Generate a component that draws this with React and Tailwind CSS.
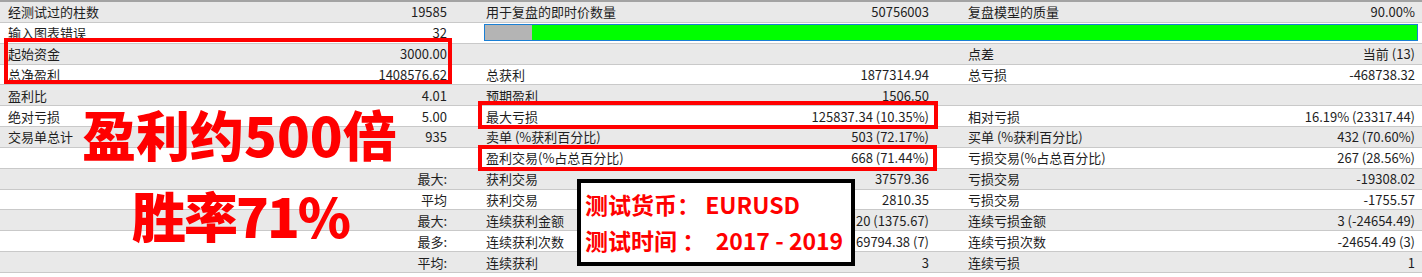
import React from 'react';

const rows = [
  ['经测试过的柱数', '19585', '用于复盘的即时价数量', '50756003', '复盘模型的质量', '90.00%'],
  ['输入图表错误', '32', null, null, null, null],
  ['起始资金', '3000.00', '', '', '点差', '当前 (13)'],
  ['总净盈利', '1408576.62', '总获利', '1877314.94', '总亏损', '-468738.32'],
  ['盈利比', '4.01', '预期盈利', '1506.50', '', ''],
  ['绝对亏损', '5.00', '最大亏损', '125837.34 (10.35%)', '相对亏损', '16.19% (23317.44)'],
  ['交易单总计', '935', '卖单 (%获利百分比)', '503 (72.17%)', '买单 (%获利百分比)', '432 (70.60%)'],
  ['', '', '盈利交易(%占总百分比)', '668 (71.44%)', '亏损交易(%占总百分比)', '267 (28.56%)'],
  ['', '最大:', '获利交易', '37579.36', '亏损交易', '-19308.02'],
  ['', '平均', '获利交易', '2810.35', '亏损交易', '-1755.57'],
  ['', '最大:', '连续获利金额', '20 (1375.67)', '连续亏损金额', '3 (-24654.49)'],
  ['', '最多:', '连续获利次数', '69794.38 (7)', '连续亏损次数', '-24654.49 (3)'],
  ['', '平均:', '连续获利', '3', '连续亏损', '1'],
];

function Row({ r, i }) {
  const bg = i % 2 === 0 ? 'bg-[#e9e9e9]' : 'bg-white';
  if (r[2] === null) {
    return (
      <div className={`grid grid-cols-[478px_462px_482px] h-[20.85px] border-b border-[#c9c9c9] ${bg}`}>
        <div className="flex items-center justify-between pl-2 pr-[31px]">
          <span>{r[0]}</span>
          <span>{r[1]}</span>
        </div>
        <div className="col-span-2 flex items-center pl-[6px] pr-[4px]">
          <div className="flex h-[17px] w-full border border-[#1a7fd4] bg-[#00ff00]">
            <div className="h-full w-[47px] bg-[#b4b4b4]" />
          </div>
        </div>
      </div>
    );
  }
  return (
    <div className={`grid grid-cols-[478px_462px_482px] h-[20.85px] border-b border-[#c9c9c9] ${bg}`}>
      <div className="flex items-center justify-between pl-2 pr-[31px]">
        <span>{r[0]}</span>
        <span>{r[1]}</span>
      </div>
      <div className="flex items-center justify-between pl-2 pr-[11px]">
        <span>{r[2]}</span>
        <span>{r[3]}</span>
      </div>
      <div className="flex items-center justify-between pl-[28px] pr-[7px]">
        <span>{r[4]}</span>
        <span>{r[5]}</span>
      </div>
    </div>
  );
}

export default function App() {
  return (
    <div className="relative w-[1422px] h-[277px] overflow-hidden bg-white text-[13px] leading-none text-[#1e1e1e] font-['Noto_Sans_CJK_SC',sans-serif]">
      <div className="border-t-2 border-[#a3a3a3]">
        {rows.map((r, i) => (
          <Row key={i} r={r} i={i} />
        ))}
      </div>

      {/* red highlight boxes */}
      <div className="absolute left-[4px] top-[38px] w-[448px] h-[46px] border-4 border-[#ff0000]" />
      <div className="absolute left-[478px] top-[101px] w-[460px] h-[28px] border-4 border-[#ff0000]" />
      <div className="absolute left-[478px] top-[145px] w-[459px] h-[26px] border-4 border-[#ff0000]" />

      {/* big annotations */}
      <div className="absolute left-[82px] top-[107px] text-[54px] leading-none font-black text-[#ff0000] whitespace-nowrap">
        盈利约500倍
      </div>
      <div className="absolute left-[132px] top-[188px] text-[54px] leading-none font-black tracking-[-2px] text-[#ff0000] whitespace-nowrap">
        胜率71%
      </div>

      <div className="absolute left-[577px] top-[179px] w-[278px] h-[87px] border-4 border-black bg-white flex flex-col justify-center pl-[4px] gap-[13px] text-[23px] leading-none font-bold text-[#ff0000] whitespace-nowrap">
        <div>测试货币： EURUSD</div>
        <div>测试时间 ：&nbsp;&nbsp;2017 - 2019</div>
      </div>
    </div>
  );
}
